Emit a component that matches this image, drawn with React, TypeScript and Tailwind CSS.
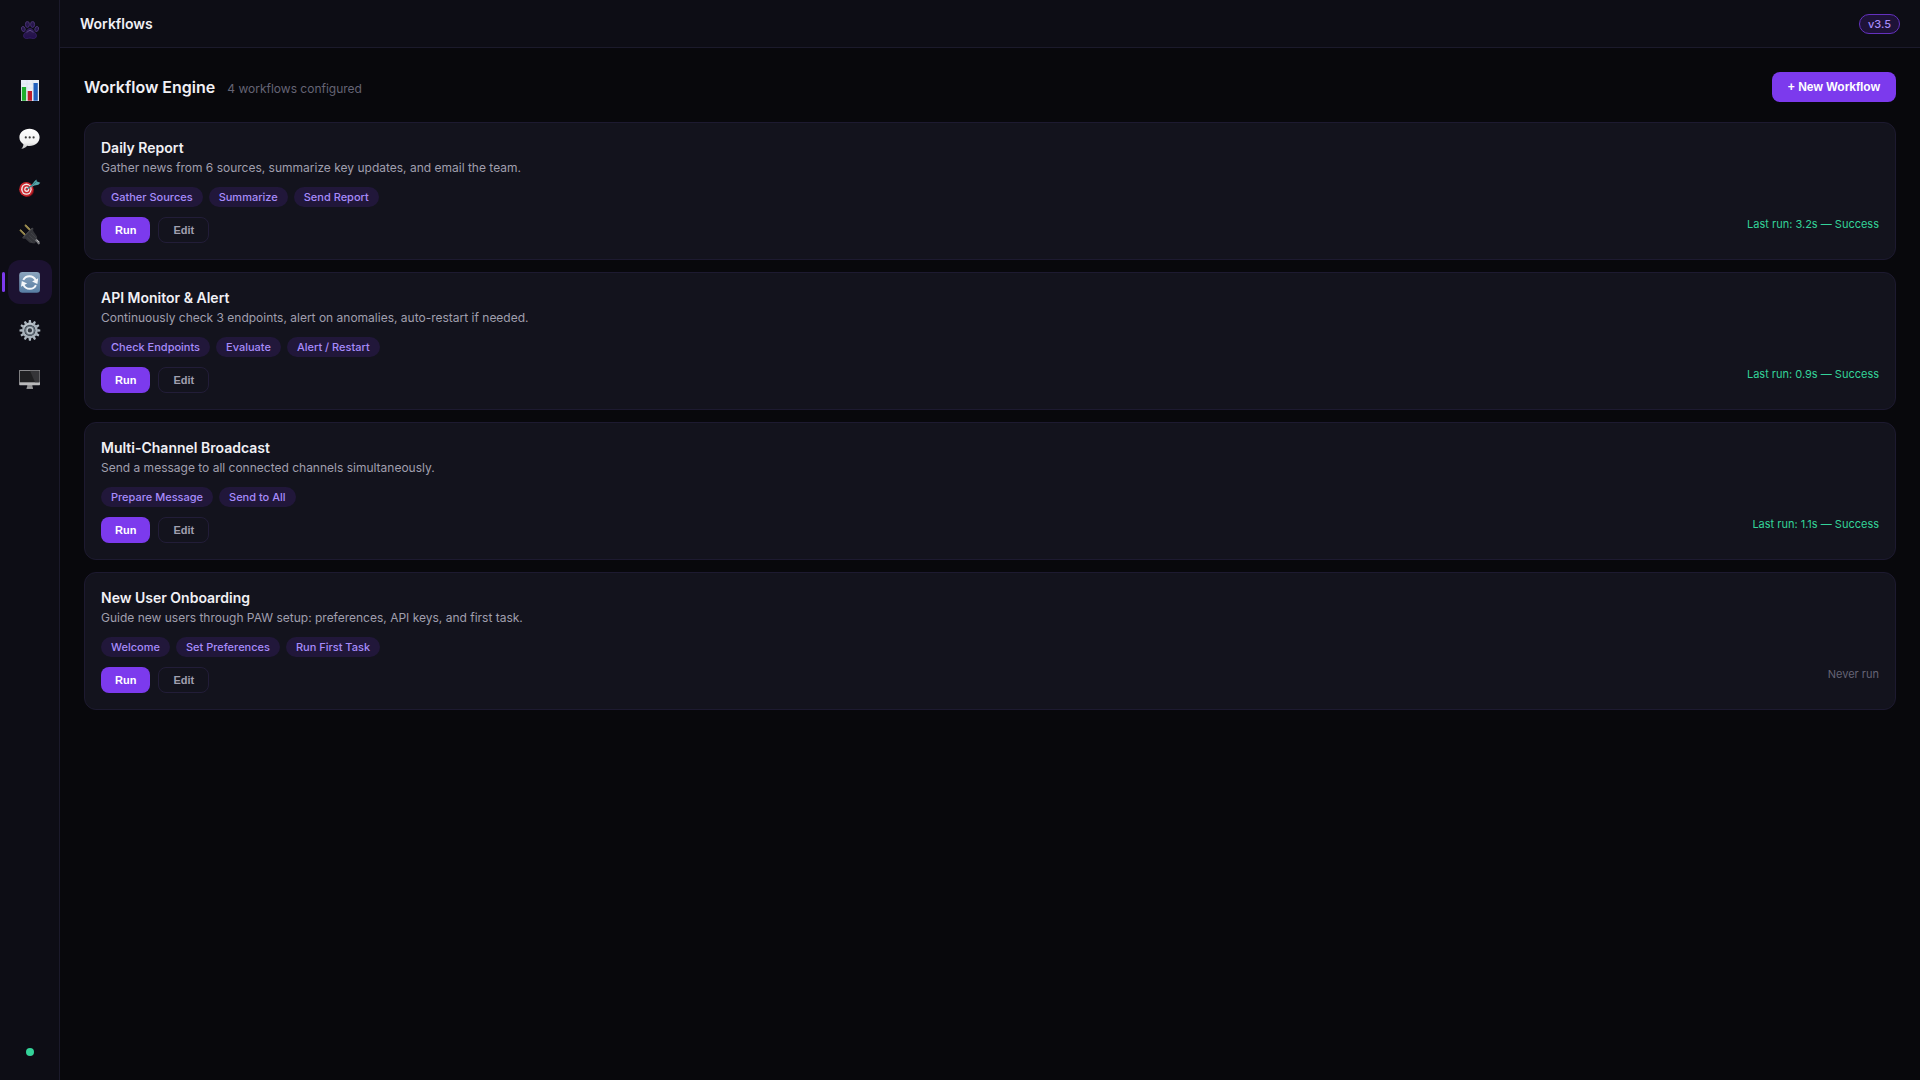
/**
 * Workflows Page
 *
 * Lists the configured workflows with their steps and last run status.
 */

import type { ReactNode } from 'react';

interface Workflow {
  id: string;
  name: string;
  description: string;
  steps: string[];
  lastRun?: string;
}

const workflows: Workflow[] = [
  {
    id: 'daily-report',
    name: 'Daily Report',
    description: 'Gather news from 6 sources, summarize key updates, and email the team.',
    steps: ['Gather Sources', 'Summarize', 'Send Report'],
    lastRun: 'Last run: 3.2s — Success',
  },
  {
    id: 'api-monitor',
    name: 'API Monitor & Alert',
    description: 'Continuously check 3 endpoints, alert on anomalies, auto-restart if needed.',
    steps: ['Check Endpoints', 'Evaluate', 'Alert / Restart'],
    lastRun: 'Last run: 0.9s — Success',
  },
  {
    id: 'broadcast',
    name: 'Multi-Channel Broadcast',
    description: 'Send a message to all connected channels simultaneously.',
    steps: ['Prepare Message', 'Send to All'],
    lastRun: 'Last run: 1.1s — Success',
  },
  {
    id: 'onboarding',
    name: 'New User Onboarding',
    description: 'Guide new users through PAW setup: preferences, API keys, and first task.',
    steps: ['Welcome', 'Set Preferences', 'Run First Task'],
  },
];

function Icon({ children }: { children: ReactNode }) {
  return (
    <svg className="size-[22px]" viewBox="0 0 22 22" fill="none" aria-hidden="true">
      {children}
    </svg>
  );
}

function PawLogo() {
  return (
    <svg className="size-[18px]" viewBox="0 0 18 18" aria-hidden="true">
      <defs>
        <linearGradient id="paw" x1="0" y1="0" x2="0" y2="1">
          <stop offset="0" stopColor="#2c1d4c" />
          <stop offset="1" stopColor="#220f4c" />
        </linearGradient>
      </defs>
      <g fill="url(#paw)" stroke="#4f3a7c" strokeWidth="0.8">
        <ellipse cx="6.400" cy="3.400" rx="2" ry="3" />
        <ellipse cx="11.600" cy="3.400" rx="2" ry="3" />
        <ellipse cx="2.300" cy="8" rx="1.800" ry="2.600" transform="rotate(-18 2.300 8)" />
        <ellipse cx="15.700" cy="8" rx="1.800" ry="2.600" transform="rotate(18 15.700 8)" />
        <path
          d="M9 7.600C6.900 7.600 6 9.300 5.100 10.600 4 12 2.600 12.800 2.600 14.800c0 1.800 1.300 2.700 2.900 2.700 1.300 0 2.300-.5 3.500-.5s2.200.5 3.500.5c1.600 0 2.900-.9 2.900-2.700 0-2-1.400-2.800-2.500-4.200C12 9.300 11.100 7.600 9 7.600Z"
          stroke="#3b2371"
        />
      </g>
      <path d="M5.800 11.600Q9 7.200 12.200 11.600" fill="none" stroke="#64508f" strokeWidth="0.900" />
    </svg>
  );
}

function ChartIcon() {
  return (
    <Icon>
      <rect x="2" y="1" width="18" height="21" fill="#e8eef6" />
      <path d="M2 5h18M2 9h18M2 13h18M2 17h18M8 1v21M14 1v21" stroke="#d3dce8" strokeWidth="0.5" />
      <rect x="2.9" y="8" width="4.2" height="13.7" fill="#1fae2d" />
      <rect x="8.7" y="12" width="4.3" height="9.7" fill="#bd1f2b" />
      <rect x="14.5" y="4" width="4.3" height="17.7" fill="#1f5fbd" />
    </Icon>
  );
}

function ChatIcon() {
  return (
    <Icon>
      <defs>
        <linearGradient id="bubble" x1="0" y1="0" x2="0" y2="1">
          <stop offset="0" stopColor="#ffffff" />
          <stop offset="0.7" stopColor="#f0f0f0" />
          <stop offset="1" stopColor="#bdbdbd" />
        </linearGradient>
      </defs>
      <g transform="translate(0 0.700)">
        <path
          d="M10.500 1C4.800 1 .4 4.600.4 9.600c0 3 1.500 5.400 4 6.900.1 1.800-.9 3.400-2.200 4.600 2.800-.2 4.700-1.300 5.900-3 .8.1 1.600.2 2.400.2 5.700 0 10.100-3.700 10.100-8.700S16.200 1 10.500 1Z"
          fill="url(#bubble)"
        />
        <circle cx="6.800" cy="9.700" r="1.100" fill="#3c3c3c" />
        <circle cx="10.700" cy="9.700" r="1.100" fill="#3c3c3c" />
        <circle cx="14.600" cy="9.700" r="1.100" fill="#3c3c3c" />
      </g>
    </Icon>
  );
}

function TargetIcon() {
  return (
    <Icon>
      <ellipse cx="8.2" cy="15" rx="6.8" ry="7" fill="#7d1218" />
      <ellipse cx="7.2" cy="14.2" rx="7" ry="7.2" fill="#c9252d" />
      <ellipse cx="7.4" cy="14.2" rx="5.3" ry="5.6" fill="#f1e8e8" />
      <ellipse cx="7.5" cy="14.2" rx="3.9" ry="4.2" fill="#cc2830" />
      <ellipse cx="7.7" cy="14.2" rx="2.5" ry="2.7" fill="#f1e8e8" />
      <ellipse cx="7.8" cy="14.2" rx="1.2" ry="1.4" fill="#c9252d" />
      <path d="M8 14 16 8.4" stroke="#2e7f86" strokeWidth="1.2" />
      <path d="m12.200 10.400 3.100-4 2-2 .7 2.100 3.300 1.300-1.900 2-4 .7-2.600 1.300Z" fill="#55a6aa" />
      <path d="m13 10.600 4.500-4" stroke="#256a70" strokeWidth="0.7" />
    </Icon>
  );
}

function PlugIcon() {
  return (
    <Icon>
      <path d="m1 6.800 6 6M6 2l6 6" stroke="#938447" strokeWidth="1.8" />
      <path d="m1.400 6.500 6 6M6.400 1.700l6 6" stroke="#c3b577" strokeWidth="0.5" />
      <path d="m13.300 4.400 1.200 1.200-.4 2.200 3.900 5.800.3 4.400-3 2.600-4.500-.9-4.500-3.900-2.400-.1-.6-1.200Z" fill="#34353a" />
      <path d="m4 14.500 9.400-9.500" stroke="#5b5c60" strokeWidth="0.8" />
      <path d="m8 14.500 5.500 5M10 12.400l6 5M12 10l5 5" stroke="#4a4b50" strokeWidth="0.6" />
      <path d="m16 17.300 1.500-1.500 3 2.700.4 2.500-1.600.6Z" fill="#77787c" />
      <path d="m17.800 17 2.300 2.200" stroke="#c4c5c7" strokeWidth="1" />
    </Icon>
  );
}

function SyncIcon() {
  return (
    <Icon>
      <defs>
        <linearGradient id="sync" x1="0" y1="0" x2="0" y2="1">
          <stop offset="0" stopColor="#8ca5be" />
          <stop offset="1" stopColor="#577da3" />
        </linearGradient>
      </defs>
      <g transform="translate(0 0.500)">
        <rect x="0.200" y="0.500" width="20.800" height="20.800" rx="3.200" fill="url(#sync)" />
        <path d="M4.300 8.400A6.900 6.900 0 0 1 16.700 8.600" stroke="#f4f7fa" strokeWidth="2" />
        <path d="M16.900 13.600A6.900 6.900 0 0 1 4.500 13.400" stroke="#f4f7fa" strokeWidth="2" />
        <path d="m19.200 6.700-.8 5.900-5.300-2.500Z" fill="#f4f7fa" />
        <path d="m2 15.300.8-5.900 5.300 2.500Z" fill="#f4f7fa" />
      </g>
    </Icon>
  );
}

const gearTeeth = [0, 30, 60, 90, 120, 150, 180, 210, 240, 270, 300, 330];

function GearIcon() {
  return (
    <Icon>
      <g transform="translate(0 0.400)">
        {gearTeeth.map((angle) => (
          <path
            key={angle}
            d="M9.500 3.500 9.900.6h2l.4 2.900Z"
            fill="#aeb8c1"
            transform={`rotate(${angle} 10.900 11)`}
          />
        ))}
        <circle cx="10.900" cy="11" r="6.700" stroke="#a8b2bb" strokeWidth="2.500" />
        <circle cx="10.900" cy="11" r="5.200" fill="#65717c" />
        <circle cx="10.900" cy="11" r="2.900" fill="#30363f" stroke="#b8c1c8" strokeWidth="1.500" />
        <path d="M5 7.600A6.800 6.800 0 0 1 14 5" stroke="#d2d8dd" strokeWidth="0.700" />
      </g>
    </Icon>
  );
}

function MonitorIcon() {
  return (
    <Icon>
      <path d="M8.300 18h5l.4 3.200H7.900Z" fill="#8e8e90" />
      <rect x="7.500" y="20.700" width="6.500" height="1" fill="#b9b9bb" />
      <rect x="0.200" y="3" width="20.800" height="15.200" rx="0.700" fill="#b9b9bb" />
      <rect x="0.800" y="3.700" width="19.600" height="11.600" fill="#202022" />
      <path d="m11 3.700 5 11.600h4.400V3.700Z" fill="#353538" />
    </Icon>
  );
}

const navItems = [
  { label: 'Dashboard', icon: <ChartIcon /> },
  { label: 'Chat', icon: <ChatIcon /> },
  { label: 'Goals', icon: <TargetIcon /> },
  { label: 'Connections', icon: <PlugIcon /> },
  { label: 'Workflows', icon: <SyncIcon />, active: true },
  { label: 'Settings', icon: <GearIcon /> },
  { label: 'System', icon: <MonitorIcon /> },
];

function Sidebar() {
  return (
    <aside className="flex w-15 shrink-0 flex-col items-center border-r border-[#1b1a2b] bg-[#0d0d15] pt-[21px] pb-6">
      <PawLogo />
      <nav className="mt-[29px] flex flex-col gap-1">
        {navItems.map((item) => (
          <button
            key={item.label}
            type="button"
            aria-label={item.label}
            aria-current={item.active ? 'page' : undefined}
            className={`relative flex size-11 items-center justify-center rounded-xl ${
              item.active ? 'bg-[#1c1231]' : ''
            }`}
          >
            {item.active && (
              <span className="absolute top-3 -left-1.5 h-5 w-[3px] rounded-sm bg-[#7c3aed]" />
            )}
            {item.icon}
          </button>
        ))}
      </nav>
      <span className="mt-auto size-2 rounded-full bg-[#34d399]" />
    </aside>
  );
}

function WorkflowCard({ workflow }: { workflow: Workflow }) {
  return (
    <article className="rounded-xl border border-[#1d1a30] bg-[#13131d] p-4">
      <h3 className="text-sm leading-[18px] font-semibold text-[#f1f0f5]">{workflow.name}</h3>
      <p className="mt-0.5 text-xs leading-[18px] text-[#a09fae]">{workflow.description}</p>
      <ul className="mt-2.5 flex flex-wrap gap-1.5">
        {workflow.steps.map((step) => (
          <li
            key={step}
            className="rounded-full bg-[#21173a] px-2.5 text-[11px] leading-5 font-medium text-[#a78bfa]"
          >
            {step}
          </li>
        ))}
      </ul>
      <div className="flex items-center justify-between">
        <div className="flex gap-2 pt-2.5 font-['Liberation_Sans',sans-serif]">
          <button
            type="button"
            className="h-[26px] rounded-lg bg-[#7c3aed] px-3.5 text-[11px] font-bold text-white"
          >
            Run
          </button>
          <button
            type="button"
            className="h-[26px] rounded-lg border border-[#221d38] px-3.5 text-[11px] font-bold text-[#a09fae]"
          >
            Edit
          </button>
        </div>
        <span
          className={`mb-0.5 text-[11px] leading-4 ${
            workflow.lastRun ? 'text-[#34d399]' : 'text-[#656475]'
          }`}
        >
          {workflow.lastRun ?? 'Never run'}
        </span>
      </div>
    </article>
  );
}

export default function App() {
  return (
    <div className="flex min-h-screen bg-[#08080c] font-[Inter,sans-serif] text-[#f1f0f5]">
      <Sidebar />
      <div className="flex min-w-0 flex-1 flex-col">
        {/* Top bar */}
        <header className="flex h-12 items-center justify-between border-b border-[#1b1a2b] bg-[#0d0d15] px-5">
          <h1 className="text-sm font-semibold">Workflows</h1>
          <span className="rounded-full border border-[#6431bf] bg-[#1e1238] px-2 text-[11px] leading-[18px] font-medium text-[#a78bfa]">
            v3.5
          </span>
        </header>

        <main className="flex-1 p-6">
          <div className="mb-5 flex items-center justify-between">
            <div className="flex items-baseline gap-3">
              <h2 className="text-base font-semibold">Workflow Engine</h2>
              <span className="text-xs text-[#656475]">{workflows.length} workflows configured</span>
            </div>
            <button
              type="button"
              className="h-[30px] rounded-lg bg-[#7c3aed] px-4 font-['Liberation_Sans',sans-serif] text-xs font-bold text-white"
            >
              + New Workflow
            </button>
          </div>

          {/* Workflow list */}
          <div className="flex flex-col gap-3">
            {workflows.map((workflow) => (
              <WorkflowCard key={workflow.id} workflow={workflow} />
            ))}
          </div>
        </main>
      </div>
    </div>
  );
}
